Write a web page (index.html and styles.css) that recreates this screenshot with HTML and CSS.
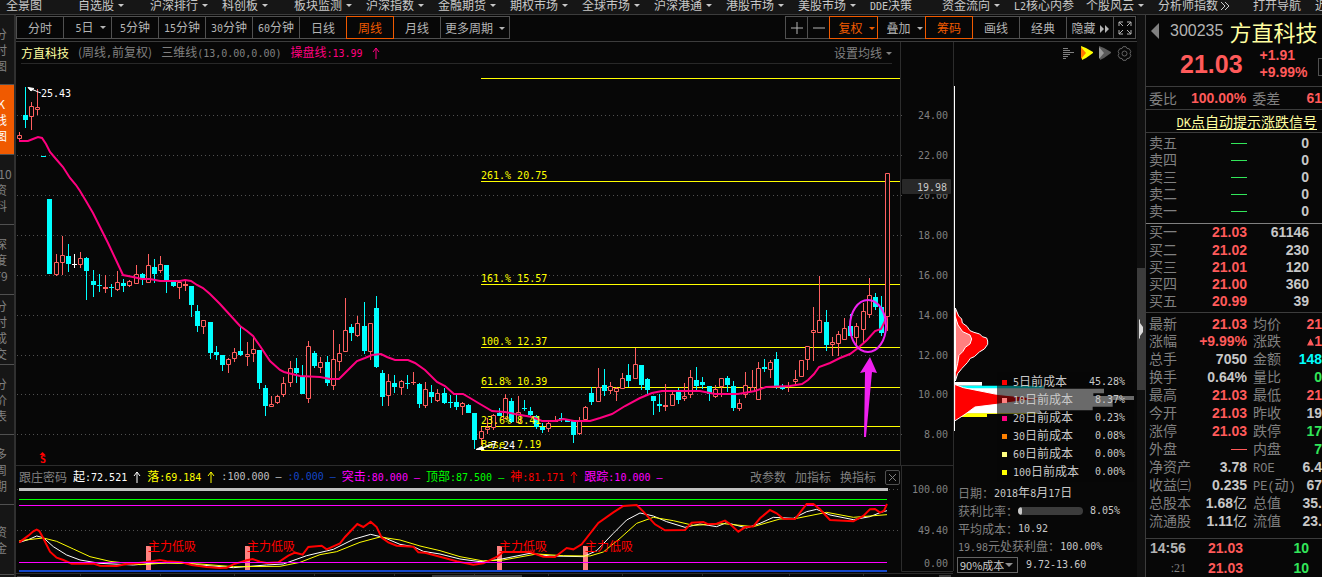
FILE: index.html
```html
<!DOCTYPE html>
<html lang="zh-CN">
<head>
<meta charset="utf-8">
<title>方直科技 周线</title>
<link rel="stylesheet" href="styles.css">
</head>
<body>
<div class="app">
<nav class="menu">
  <a class="menu-item" href="#">全景图</a>
  <a class="menu-item drop" href="#">自选股</a>
  <a class="menu-item drop" href="#">沪深排行</a>
  <a class="menu-item drop" href="#">科创板</a>
  <a class="menu-item drop" href="#">板块监测</a>
  <a class="menu-item drop" href="#">沪深指数</a>
  <a class="menu-item drop" href="#">金融期货</a>
  <a class="menu-item drop" href="#">期权市场</a>
  <a class="menu-item drop" href="#">全球市场</a>
  <a class="menu-item drop" href="#">沪深港通</a>
  <a class="menu-item drop" href="#">港股市场</a>
  <a class="menu-item drop" href="#">美股市场</a>
  <a class="menu-item" href="#"><span class="n">DDE</span>决策</a>
  <a class="menu-item drop" href="#">资金流向</a>
  <a class="menu-item" href="#"><span class="n">L2</span>核心内参</a>
  <a class="menu-item drop" href="#">个股风云</a>
  <a class="menu-item wide" href="#">分析师指数<svg class="dbl" viewBox="0 0 10 8"><path d="M1 0l4 4-4 4M5 0l4 4-4 4"/></svg></a>
  <a class="menu-item open" href="#">打开导航</a>
  <a class="menu-item" href="#">近</a>
</nav>
<div class="main">
  <aside class="side">
    <button class="tab"><span>分</span><span>时</span><span>图</span></button>
    <button class="tab active"><span>K</span><span>线</span><span>图</span></button>
    <button class="tab"><span class="num">10</span><span>资</span><span>料</span></button>
    <button class="tab"><span>深</span><span>度</span><span>F9</span></button>
    <button class="tab"><span>分</span><span>时</span><span>成</span><span>交</span></button>
    <button class="tab"><span>分</span><span>价</span><span>表</span></button>
    <button class="tab"><span>多</span><span>周</span><span>期</span></button>
    <button class="tab"><span>资</span><span>金</span></button>
  </aside>
  <section class="center">
    <div class="toolbar">
      <button class="btn">分时</button>
      <button class="btn drop"><span class="n">5</span>日</button>
      <button class="btn"><span class="n">5</span>分钟</button>
      <button class="btn"><span class="n">15</span>分钟</button>
      <button class="btn"><span class="n">30</span>分钟</button>
      <button class="btn"><span class="n">60</span>分钟</button>
      <button class="btn">日线</button>
      <button class="btn on">周线</button>
      <button class="btn">月线</button>
      <button class="btn more drop">更多周期</button>
      <span class="grow"></span>
      <button class="btn small" aria-label="放大"><svg class="ico" viewBox="0 0 12 12"><path d="M6 0v12M0 6h12"/></svg></button>
      <button class="btn small" aria-label="缩小"><svg class="ico" viewBox="0 0 12 12"><path d="M0 6h12"/></svg></button>
      <button class="btn on drop">复权</button>
      <button class="btn drop">叠加</button>
      <button class="btn on">筹码</button>
      <button class="btn">画线</button>
      <button class="btn">经典</button>
      <button class="btn">隐藏<svg class="fwd" viewBox="0 0 10 8"><path d="M1 0l4 4-4 4zM6 0l4 4-4 4z"/></svg></button>
      <button class="btn small" aria-label="全屏"><svg class="ico full" viewBox="0 0 14 14"><path d="M1 5V1h4M1 1l4 4M9 1h4v4M13 1L9 5M1 9v4h4M1 13l4-4M13 9v4H9M13 13L9 9"/></svg></button>
    </div>
    <div class="body">
      <div class="charts">
        <div class="head">
          <span class="name">方直科技</span>
          <span>(周线<span class="n">,</span>前复权)</span>
          <span>三维线<span class="n">(13,0.00,0.00)</span></span>
          <span class="pink">操盘线<span class="n">:13.99</span></span>
          <svg class="up pink" viewBox="0 0 8 12"><path d="M4 1v11M1 5l3-4 3 4"/></svg>
          <span class="grow"></span>
          <button class="plain drop">设置均线</button>
        </div>
        <svg class="kline" viewBox="16 64 938 402">
          <g id="grid" class="grid"></g>
          <path class="axis" d="M900.5 42V466M953.5 42V466M16 465.5H953"/>
          <g class="axis-text" id="axis"></g>
          <path class="fib" d="M481 78.5H900M481 181.5H900M481 284.5H900M481 347.5H900M481 387.5H900M481 426.5H900M481 450.5H900"/>
          <g id="candles" class="candles"></g>
          <polyline class="ma" points="19,141 28,141 33,139 38,137 42,138 46,144 50,152 56,159 63,167 70,178 76,185 80,191 86,201 93,213 100,227 108,243 116,260 123,275 133,277 142,279 150,279 160,281 180,281 185,280 191,281 197,285 203,288 210,294 220,304 230,315 240,326 247,331 253,336 260,346 270,361 280,370 284,372 300,376 320,377 330,379 339,379 345,373 352,366 357,361 365,358 372,355 381,354 387,357 395,360 408,360 415,363 425,370 437,382 445,386 454,394 463,394 470,398 480,404 492,411 505,412 515,414 532,417 542,421 555,421 564,419 574,421 590,421 600,418 612,414 625,406 640,398 652,393 662,391 700,391 715,394 738,394 755,391 766,387 790,386 802,384 808,380 814,374 819,367 830,363 840,358 850,354 858,348 867,340 875,331 881,329 884,323 887,317"/>
          <g class="fib-text">
            <text x="481" y="179">261.% 20.75</text>
            <text x="481" y="282">161.% 15.57</text>
            <text x="481" y="345">100.% 12.37</text>
            <text x="481" y="385">61.8% 10.39</text>
            <text x="481" y="424">23.6% 8.41</text>
            <text x="481" y="448">Base  7.19</text>
          </g>
          <g class="peak">
            <path d="M28 87.500l6 1-3 2.500zM32 89.500l3 1 2 1 4 1.500M476 449.500l6-3 2 3zM481 448l4-1 4-2 6-1"/>
            <text x="41" y="97">25.43</text>
            <text x="485" y="449">-7.24</text>
          </g>
          <g class="mark"><path d="M42.500 452l3 3h-6z"/><text x="40" y="463">S</text></g>
          <ellipse class="ring" cx="868" cy="326" rx="18" ry="26"/>
          <path class="arrow" d="M870 357l7 16-5-1-6 65h-2l1-65-5 1z"/>
          <rect class="tag" x="902" y="179" width="49" height="15" rx="1"/>
          <text class="tag-text" x="947" y="191">19.98</text>
        </svg>
        <div class="ind-head">
          <span class="dim">跟庄密码</span>
          <span class="white">起<span class="n">:72.521</span></span>
          <svg class="up white" viewBox="0 0 8 12"><path d="M4 1v11M1 5l3-4 3 4"/></svg>
          <span class="yellow">落<span class="n">:69.184</span></span>
          <svg class="up yellow" viewBox="0 0 8 12"><path d="M4 1v11M1 5l3-4 3 4"/></svg>
          <span class="silver n">:100.000 –</span>
          <span class="blue n">:0.000 –</span>
          <span class="magenta">突击<span class="n">:80.000 –</span></span>
          <span class="green">顶部<span class="n">:87.500 –</span></span>
          <span class="red">神<span class="n">:81.171</span></span>
          <svg class="up red" viewBox="0 0 8 12"><path d="M4 1v11M1 5l3-4 3 4"/></svg>
          <span class="magenta">跟踪<span class="n">:10.000 –</span></span>
          <span class="grow"></span>
          <button class="plain">改参数</button>
          <button class="plain">加指标</button>
          <button class="plain">换指标</button>
          <button class="close" aria-label="关闭"><svg viewBox="0 0 9 9"><path d="M1 1l7 7M8 1L1 8"/></svg></button>
        </div>
        <svg class="ind" viewBox="16 488 938 89">
          <path class="grid" d="M17 530.500H904M17 489.500H904"/>
          <path class="axis" d="M901.500 466V571.500H953M953.500 466V571M16 573.500H953M80.500 573v3M160.500 573v3M234.500 573v3M314.500 573v3M394.500 573v3M474.500 573v3M548.500 573v3M622.500 573v3M702.500 573v3M789.500 573v3M863.500 573v3"/>
          <g class="axis-text"><text x="948" y="493">100.00</text><text x="948" y="534">49.40</text><text x="948" y="567">0.00</text></g>
          <path class="l-silver" d="M19 489.500H888"/>
          <path class="l-green" d="M19 499.500H887"/>
          <path class="l-mag" d="M19 505.500H887"/>
          <path class="bars" d="M146 546h5v24h-5zM245 546h5v24h-5zM497 546h5v24h-5zM583 546h5v24h-5z"/>
          <g transform="translate(0 380) scale(.33333)" class="lines">
            <polyline class="w" points="58,487 85,479 110,468 130,473 160,500 200,525 240,540 300,550 400,555 470,549 550,548 600,555 700,563 800,555 850,552 920,527 1000,508 1060,478 1112,463 1150,472 1200,493 1240,500 1270,514 1320,522 1380,537 1440,545 1500,538 1590,520 1650,528 1750,530 1790,512 1840,460 1880,420 1920,399 1960,408 2000,425 2055,442 2100,432 2150,440 2180,428 2240,444 2280,430 2320,412 2380,415 2420,395 2450,388 2490,405 2560,419 2610,410 2640,398 2661,392"/>
            <polyline class="y" points="58,482 130,474 170,484 220,507 270,530 330,544 420,554 500,549 600,552 700,560 840,559 900,547 960,524 1010,515 1080,487 1140,471 1200,480 1260,498 1320,512 1380,530 1450,543 1510,540 1610,522 1690,527 1770,528 1810,516 1860,475 1910,430 1960,412 2020,422 2080,436 2170,431 2260,440 2340,417 2390,415 2480,397 2560,412 2661,404"/>
            <polyline class="r" points="58,487 85,467 100,454 110,449 118,453 130,475 150,515 170,533 190,540 215,551 280,551 300,557 350,558 380,552 410,550 440,546 480,540 500,544 545,547 575,555 620,561 660,564 680,563 700,553 740,541 758,537 780,545 800,549 835,547 865,527 885,518 908,524 925,501 965,497 980,508 1020,490 1035,471 1072,432 1090,441 1112,425 1130,441 1145,473 1165,487 1190,497 1240,500 1255,517 1275,518 1320,530 1370,544 1420,554 1450,550 1490,531 1510,516 1590,516 1630,530 1665,531 1700,504 1720,508 1745,493 1795,429 1840,397 1870,378 1910,375 1930,395 1965,433 1995,451 2055,450 2075,428 2110,426 2125,433 2150,431 2175,422 2190,432 2215,455 2235,442 2260,439 2280,415 2310,390 2330,400 2350,416 2385,417 2420,372 2440,372 2460,388 2490,420 2560,424 2590,408 2610,388 2625,387 2640,398 2652,392 2661,372"/>
          </g>
          <path class="l-mag" d="M19 562.500H887"/>
          <path class="l-blue" d="M19 571H887"/>
          <g class="sig"><text x="148" y="551">主力低吸</text><text x="247" y="551">主力低吸</text><text x="499" y="551">主力低吸</text><text x="585" y="551">主力低吸</text></g>
          <path class="thumb" d="M17 577v-1h13v1zM432 577v-2h90v2zM939 577v-2h12v2z"/>
        </svg>
      </div>
      <div class="chips">
        <div class="chips-icons">
          <svg class="i-list" viewBox="0 0 12 12"><path d="M1 1.500h5M1 3.500h7M1 5.500h11M1 7.500h7M1 9.500h5M1 11.500h3"/></svg>
          <svg class="i-flag" viewBox="0 0 12 14"><path fill="#ff0" d="M0 0l5 2 7 4v1L5 12l-4 2z"/><path fill="#ff7800" d="M0 1l5 6-5 6z"/></svg>
          <svg class="i-flag" viewBox="0 0 12 14"><path fill="#5a5a5a" d="M0 0l5 2 7 4v1L5 12l-4 2z"/><path fill="#9a9a9a" d="M0 1l5 6-5 6z"/></svg>
          <svg class="i-gear" viewBox="0 0 15 15"><path d="M5 2.500L6 .700h3l1 1.800 2.300.300L13.800 5.500 13 7.500l.800 2-1.500 2.700-2.300.300-1 1.800H6l-1-1.800-2.300-.300L1.200 9.500l.800-2-.800-2 1.500-2.700z"/><circle cx="7.500" cy="7.500" r="2.500"/></svg>
        </div>
        <div class="chips-chart">
          <svg viewBox="954 64 183 420">
            <path stroke="#fff" d="M954.500 86V431"/>
            <g transform="translate(880 300) scale(.33333)">
              <path class="o" fill="red" d="M226 24l10 24 9 9 2 12 14 10 9 13 12 5 17 5 8 8 13 4 3 9v10l-10 14-15 9-15 14-12 5-9 13-16 17-13 16-7 22z"/>
              <path class="o" fill="#ff8080" d="M226 50l8 25 14 20 22 10 5 12-5 15-14 10-7 12-12 12-4 24-6 25z"/>
              <path fill="#fff" d="M224 246h82v11h-82zM224 262h270v4h178v14h-32v8h122v12h-64v20h-60v11H480v10H224z"/>
              <path fill="#0ff" d="M224 257h266v8H224z"/>
              <path fill="#ff0" d="M224 340h256v2H321v9h-97z"/>
              <path class="o" fill="red" d="M224 253l26 10 35 7 65 13 80 8 70 5-70 6-80 11-65 8-30 22-31 20z"/>
            </g>
          </svg>
          <ul class="legend">
            <li><i class="c1"></i><span><b class="n">5</b>日前成本</span><b class="n">45.28%</b></li>
            <li><i class="c2"></i><span><b class="n">10</b>日前成本</span><b class="n">8.37%</b></li>
            <li><i class="c3"></i><span><b class="n">20</b>日前成本</span><b class="n">0.23%</b></li>
            <li><i class="c4"></i><span><b class="n">30</b>日前成本</span><b class="n">0.08%</b></li>
            <li><i class="c5"></i><span><b class="n">60</b>日前成本</span><b class="n">0.00%</b></li>
            <li><i class="c6"></i><span><b class="n">100</b>日前成本</span><b class="n">0.00%</b></li>
          </ul>
        </div>
        <div class="chips-info">
          <p><span>日期：</span><em><b class="n">2018</b>年<b class="n">8</b>月<b class="n">17</b>日</em></p>
          <p><span>获利比率：</span><span class="bar"><span class="fill"></span></span><em class="n">8.05%</em></p>
          <p><span>平均成本：</span><em class="n">10.92</em></p>
          <p><span><b class="n">19.98</b>元处获利盘：</span><em class="n">100.00%</em></p>
          <p><span class="pick drop"><select aria-label="成本区间"><option>90%成本</option></select></span><em class="n">9.72-13.60</em></p>
        </div>
      </div>
    </div>
  </section>
  <div class="strip"><div class="strip-thumb"><svg viewBox="0 0 4 20"><path d="M0 0l1 1v3l3 4v5l-3 4v2l-1 1z"/></svg></div></div>
  <section class="quote">
    <div class="title">
      <div class="title-name"><svg class="prev" viewBox="0 0 8 16"><path d="M8 0v16L0 8z"/></svg><span class="code">300235</span><strong>方直科技</strong></div>
      <div class="title-price"><span class="price">21.03</span><span class="chg"><span>+1.91</span><span>+9.99%</span></span><span class="box"></span></div>
    </div>
    <div class="ratio"><span>委比</span><b>100.00%</b><span>委差</span><b>61</b></div>
    <div class="dk"><a href="#"><span class="lat">DK</span>点自动提示涨跌信号</a></div>
    <table class="book sell">
      <tr><th>卖五</th><td><i></i></td><td>0</td></tr>
      <tr><th>卖四</th><td><i></i></td><td>0</td></tr>
      <tr><th>卖三</th><td><i></i></td><td>0</td></tr>
      <tr><th>卖二</th><td><i></i></td><td>0</td></tr>
      <tr><th>卖一</th><td><i></i></td><td>0</td></tr>
    </table>
    <table class="book buy">
      <tr><th>买一</th><td>21.03</td><td>61146</td></tr>
      <tr><th>买二</th><td>21.02</td><td>230</td></tr>
      <tr><th>买三</th><td>21.01</td><td>120</td></tr>
      <tr><th>买四</th><td>21.00</td><td>360</td></tr>
      <tr><th>买五</th><td>20.99</td><td>39</td></tr>
    </table>
    <table class="stats">
      <tr><th>最新</th><td class="u">21.03</td><th>均价</th><td class="u">21</td></tr>
      <tr><th>涨幅</th><td class="u">+9.99%</td><th>涨跌</th><td class="u"><svg class="tri" viewBox="0 0 8 8"><path d="M4 0l4 8H0z"/></svg>1</td></tr>
      <tr><th>总手</th><td>7050</td><th>金额</th><td class="cy">148</td></tr>
      <tr><th>换手</th><td>0.64%</td><th>量比</th><td class="dn">0</td></tr>
      <tr><th>最高</th><td class="u">21.03</td><th>最低</th><td class="u">21</td></tr>
      <tr><th>今开</th><td class="u">21.03</td><th>昨收</th><td>19</td></tr>
      <tr><th>涨停</th><td class="u">21.03</td><th>跌停</th><td class="dn">17</td></tr>
      <tr><th>外盘</th><td class="u"><i></i></td><th>内盘</th><td class="dn">7</td></tr>
      <tr><th>净资产</th><td>3.78</td><th><span class="lat">ROE</span></th><td>6.4</td></tr>
      <tr><th>收益㈢</th><td>0.235</td><th><span class="lat">PE(</span>动<span class="lat">)</span></th><td>67</td></tr>
      <tr><th>总股本</th><td>1.68<span class="yi">亿</span></td><th>总值</th><td>35.</td></tr>
      <tr><th>流通股</th><td>1.11<span class="yi">亿</span></td><th>流值</th><td>23.</td></tr>
    </table>
    <table class="book ticks">
      <tr><th class="t">14:56</th><td>21.03</td><td>10</td></tr>
      <tr><th class="s">:21</th><td>21.03</td><td>10</td></tr>
    </table>
  </section>
</div>
</div>
<script src="chart.js"></script>
</body>
</html>
```
FILE: chart.js
```js
// Each candle: x, high, body top, body bottom, low, kind (u = up, d = down, w = flat)
const candles = `19,132,135,139,140,u 25,87,115,120,128,d 31,102,106,117,130,u 37,89,107,110,115,u 43,156,156,157,157,d
49,199,199,274,274,d 56,254,262,275,276,u 62,236,255,263,275,u 68,244,256,264,272,d 74,254,264,265,268,w 80,252,258,265,268,u
86,257,258,271,300,d 93,270,281,285,297,d 99,274,285,286,292,d 105,275,287,289,293,u 111,284,287,288,297,d 117,271,282,290,291,u
123,279,283,286,292,d 129,280,281,286,287,u 136,265,274,284,284,u 142,273,274,279,285,d 148,254,265,283,283,u 154,259,267,274,283,d
160,256,264,271,273,u 166,265,265,281,293,d 173,280,282,286,287,d 179,282,282,288,299,u 185,281,284,286,291,u 191,286,286,305,317,d
197,305,311,326,332,d 203,320,320,327,334,u 210,322,322,353,359,d 216,346,352,355,360,d 222,355,355,365,371,d 228,358,359,365,373,u
234,348,352,359,362,u 240,327,351,355,356,d 247,342,354,357,366,u 253,338,349,354,362,u 259,350,350,383,389,d 265,385,388,406,416,d
271,396,404,407,407,u 277,395,396,403,404,u 283,377,383,395,397,u 290,361,368,383,387,u 296,358,368,373,383,d 302,365,376,394,394,d
308,341,346,399,403,u 314,351,353,366,368,d 320,357,362,368,373,u 327,356,362,383,386,d 333,330,359,386,390,u 339,344,353,362,371,u
345,298,330,352,352,u 351,324,327,333,341,d 357,316,323,336,337,u 364,302,326,351,354,d 370,323,323,352,360,u 376,296,308,367,368,d
382,370,373,397,406,d 388,374,381,396,406,u 394,375,383,387,393,d 401,380,381,388,395,u 407,375,383,384,389,d 413,372,382,383,385,u
419,383,384,404,408,d 425,382,389,406,408,u 431,385,392,397,403,d 437,389,393,401,402,u 444,388,393,403,404,d 450,395,402,403,408,d
456,395,402,407,410,d 462,402,403,407,415,u 468,404,405,413,413,d 474,413,413,440,449,d 481,427,431,439,445,u 487,418,427,430,434,u
493,414,415,428,430,u 499,408,413,416,416,d 505,394,398,419,419,u 511,398,401,422,423,d 518,396,412,423,423,u 524,400,408,409,411,d
530,407,411,415,417,d 536,415,416,427,429,d 542,423,427,430,433,d 548,420,423,429,432,u 555,416,420,422,422,u 561,413,418,419,422,d
567,419,420,422,422,d 573,420,421,435,443,d 579,417,421,434,435,u 585,406,407,420,420,u 591,387,393,402,405,d 598,368,387,402,402,u
604,369,385,391,396,d 610,382,386,391,394,u 616,387,388,392,401,u 622,373,378,389,389,u 628,364,375,381,387,d 635,348,364,379,379,u
641,365,365,385,390,d 647,378,379,390,394,d 653,396,396,401,415,d 659,394,404,406,412,d 665,384,405,407,411,u 672,392,394,406,406,u
678,388,391,400,404,d 684,383,396,399,401,u 690,370,377,395,398,u 696,367,380,386,390,d 702,377,382,385,389,d 709,386,386,394,401,d
715,385,389,397,398,u 721,378,378,387,397,u 727,376,378,385,392,d 733,381,386,408,411,d 739,399,403,409,411,u 745,372,385,395,398,u
752,370,387,392,392,u 758,362,368,400,400,u 764,359,367,369,372,d 770,360,362,370,378,u 776,352,359,386,389,d 782,384,387,389,390,d
788,382,386,387,392,u 795,370,379,382,384,u 801,360,360,377,377,u 807,346,346,360,370,u 813,307,330,333,361,u 819,276,320,333,333,u
826,310,322,345,351,d 832,337,342,345,356,u 838,331,334,344,356,u 844,318,328,340,340,u 850,314,326,336,336,d 856,323,326,338,345,u
863,303,311,330,342,u 869,278,295,315,318,u 875,293,297,307,310,d 881,296,307,333,336,d 887,173,173,317,331,u`;

const NS = "http://www.w3.org/2000/svg";

function add(parent, name, attrs, text) {
  const el = document.createElementNS(NS, name);
  for (const key in attrs) el.setAttribute(key, attrs[key]);
  if (text) el.textContent = text;
  parent.appendChild(el);
}

const group = document.getElementById("candles");
for (const item of candles.split(/\s+/)) {
  const [xs, hs, ts, bs, ls, kind] = item.split(",");
  const [x, h, t, b, l] = [xs, hs, ts, bs, ls].map(Number);
  if (kind === "u" && b - t > 2) {
    add(group, "path", { class: "u", d: `M${x + .5} ${h}V${t}M${x + .5} ${b}V${l}M${x - 1.5} ${t + .5}h4V${b - .5}h-4z` });
  } else {
    add(group, "path", { class: "solid " + kind, d: `M${x} ${h}h1V${l}h-1zM${x - 2} ${t}h5V${b}h-5z` });
  }
}

const grid = document.getElementById("grid");
const axis = document.getElementById("axis");
[115, 155, 195, 235, 275, 315, 355, 394, 434].forEach((y, i) => {
  add(grid, "path", { d: `M17 ${y + .5}H904` });
  add(axis, "text", { x: 948, y: y + 4 }, (24 - i * 2).toFixed(2));
});
```
FILE: styles.css
```css
* { box-sizing: border-box; }
body {
  margin: 0;
  background: #070707;
  color: #c0c0c0;
  font: 12px/16px "Noto Sans CJK SC", sans-serif;
}
button {
  font: inherit;
  color: inherit;
  background: none;
  border: 0;
  padding: 0;
  white-space: nowrap;
}
a { color: inherit; text-decoration: none; }
table { border-collapse: collapse; table-layout: fixed; width: 100%; }
th, td { padding: 0; }
.app { min-height: 100vh; display: flex; flex-direction: column; overflow: hidden; }
.n, .kline text, .ind .axis-text text { font-family: "DejaVu Sans Mono", monospace; font-size: 10px; font-weight: 400; font-style: normal; white-space: pre; }
.lat { font: 12px/14px "Liberation Mono", monospace; }
.grow { flex: 1; }

/* top menu */
.menu {
  display: flex;
  height: 15px;
  padding-left: 6px;
  background: #161616;
  border-bottom: 1px solid #3c3c3c;
  overflow: hidden;
  color: #c8c8c8;
}
.menu-item { flex: 0 0 72px; height: 10px; line-height: 10px; white-space: nowrap; }
.menu-item.wide { flex-basis: 95px; }
.menu-item.open { flex-basis: 62px; }
.drop::after {
  content: "";
  display: inline-block;
  margin-left: 4px;
  vertical-align: 3px;
  border: 3px solid transparent;
  border-top-color: currentColor;
  border-bottom: 0;
}
.dbl { width: 10px; height: 8px; margin-left: 2px; fill: none; stroke: #c8c8c8; }

.main { flex: 1; display: flex; min-width: 0; }

/* left tabs */
.side { flex: 0 0 16px; border-right: 2px solid #303030; background: #161616; overflow: hidden; }
.tab {
  display: flex;
  flex-direction: column;
  align-items: center;
  justify-content: center;
  width: 14px;
  height: 70px;
  padding-right: 12px;
  border-bottom: 1px solid #505050;
  color: #808080;
}
.tab.active { background: #f05a00; color: #fff; }
.num { padding-left: 8px; }

/* toolbar */
.center { flex: 1; min-width: 0; display: flex; flex-direction: column; }
.toolbar {
  display: flex;
  height: 27px;
  padding: 1px 1px 2px 0;
  border-bottom: 1px solid #3c3c3c;
}
.btn {
  flex: 0 0 48px;
  height: 23px;
  margin-right: -1px;
  border: 1px solid #505050;
  color: #b4b4b4;
}
.btn:last-child { margin-right: 0; }
.btn.on { position: relative; z-index: 1; border-color: #f05a00; color: #f05a00; }
.btn.drop { flex-basis: 49px; padding-left: 6px; }
.btn.drop::after { margin-left: 6px; }
.btn.more { flex-basis: 70px; padding-left: 0; }
.btn.small { flex-basis: 23px; display: flex; align-items: center; justify-content: center; }
.ico { width: 12px; height: 12px; fill: none; stroke: #b4b4b4; }
.ico.full { width: 14px; height: 14px; }
.fwd { width: 10px; height: 8px; margin-left: 3px; fill: #b4b4b4; }

.body { flex: 1; display: flex; min-width: 0; }
.charts { flex: 1; min-width: 0; }
.kline, .ind { display: block; width: 100%; overflow: visible; }
.head {
  display: flex;
  align-items: center;
  gap: 9px;
  height: 22px;
  margin: 0 62px 0 5px;
  border-bottom: 1px solid #282828;
  color: #808080;
  white-space: nowrap;
}
.name { color: #ffffa0; }
.pink { color: #ff0080; }
.up { width: 8px; height: 12px; fill: none; stroke: currentColor; }
.plain { color: #808080; }

.ind-head {
  display: flex;
  align-items: center;
  gap: 6px;
  height: 22px;
  margin-right: 54px;
  padding-left: 3px;
  white-space: nowrap;
}
.ind-head .plain { margin-left: 3px; }
.close { width: 15px; height: 15px; border: 1px solid #505050; border-radius: 2px; display: flex; align-items: center; justify-content: center; margin: 0 0 0 3px; }
.close svg { width: 9px; height: 9px; stroke: #808080; fill: none; }
.dim { color: #808080; }
.white { color: #fff; }
.yellow { color: #ff0; }
.silver { color: #c0c0c0; }
.blue { color: #1446c8; }
.magenta { color: #f0f; }
.green { color: #0f0; }
.red { color: #f00; }

/* drawings */
.grid { stroke: #505050; stroke-dasharray: 1 3; fill: none; }
.axis { stroke: #2c2c2c; fill: none; }
.axis-text { fill: #808080; text-anchor: end; }
.fib { stroke: #ff0; fill: none; }
.fib-text { fill: #ff0; }
.candles .u { stroke: #ff6060; fill: #070707; }
.candles .solid.u { stroke: none; fill: #ff6060; }
.candles .d { fill: #0ff; }
.candles .w { fill: #fff; }
.ma { fill: none; stroke: #ff0080; stroke-width: 2; }
.peak text { fill: #fff; }
.peak path { fill: #fff; stroke: #fff; }
.mark { fill: #f00; }
.kline .mark text { font-weight: 700; }
.ring { fill: none; stroke: #f020f0; stroke-width: 2; }
.arrow { fill: #f020f0; }
.tag { fill: #282828; }
.tag-text { fill: #c8c8c8; text-anchor: end; }
.l-silver { stroke: #c0c0c0; stroke-width: 3; }
.l-green { stroke: #0f0; }
.l-mag { stroke: #f0f; }
.l-blue { stroke: #1446c8; stroke-width: 2; }
.bars { fill: #ff8080; }
.lines polyline { fill: none; vector-effect: non-scaling-stroke; }
.lines .w { stroke: #fff; }
.lines .y { stroke: #ff0; }
.lines .r { stroke: #f00; stroke-width: 2; }
.sig { fill: #f00; }
.thumb { fill: #3c3c3c; }

/* cost distribution */
.chips { flex: 0 0 183px; min-width: 0; display: flex; flex-direction: column; }
.chips-icons { height: 22px; display: flex; align-items: center; justify-content: flex-end; gap: 6px; padding-right: 5px; }
.i-list { width: 12px; height: 12px; stroke: #808080; }
.i-list { margin-right: 1px; }
.i-flag { width: 12px; height: 14px; }
.i-gear { width: 15px; height: 15px; fill: none; stroke: #646464; }
.chips-chart { position: relative; }
.chips-chart > svg { display: block; width: 100%; height: 420px; }
.o { stroke: #fff; stroke-width: 3; }
.legend {
  position: absolute;
  right: 3px;
  bottom: 2px;
  width: 137px;
  margin: 0;
  padding: 1px 9px 1px 5px;
  list-style: none;
  background: rgba(7, 7, 7, .6);
  color: #c8c8c8;
}
.legend li { display: flex; align-items: center; gap: 6px; height: 18px; white-space: nowrap; }
.legend li > :last-child { margin-left: auto; }
.legend i { width: 5px; height: 5px; }
.c1 { background: #f00; }
.c2 { background: #ff8080; }
.c3 { background: #ff0080; }
.c4 { background: #ff8000; }
.c5 { background: #ffff80; }
.c6 { background: #ff0; }
.chips-info { color: #808080; padding-left: 4px; }
.chips-info p { display: flex; align-items: center; height: 18px; margin: 0; white-space: nowrap; }
.chips-info em { font-style: normal; color: #c8c8c8; }
.bar { width: 65px; height: 8px; margin-right: 7px; border-radius: 4px; background: #3c3c3c; overflow: hidden; }
.fill { display: block; width: 4px; height: 8px; border-radius: 4px; background: #c8c8c8; }
.pick {
  display: flex;
  align-items: center;
  width: 61px;
  height: 16px;
  margin: 0 8px 0 -1px;
  border: 1px solid #646464;
  color: #909090;
}
.pick.drop::after { margin: 0 4px 0 auto; border-width: 4px 4px 0; }
.pick select {
  appearance: none;
  width: 46px;
  padding: 0 0 0 2px;
  border: 0;
  background: transparent;
  color: #c8c8c8;
  font: 11px/14px "Noto Sans CJK SC", sans-serif;
}

/* divider */
.strip { flex: 0 0 8px; padding-top: 253px; background: #101010; }
.strip-thumb { height: 122px; background: #3c3c3c; display: flex; align-items: center; }
.strip-thumb svg { width: 4px; height: 20px; margin-left: 2px; fill: #dcdcdc; }

/* quote panel */
.quote {
  flex: 0 0 177px;
  border-left: 1px solid #3c3c3c;
  overflow: hidden;
  color: #808080;
  font-size: 14px;
}
.title { height: 72px; border-bottom: 1px solid #3c3c3c; white-space: nowrap; overflow: hidden; }
.title-name { display: flex; align-items: center; height: 32px; padding-left: 5px; font: 16px "Liberation Sans", sans-serif; color: #b4b4b4; }
.prev { width: 8px; height: 16px; margin-right: 11px; fill: #808080; }
.title-name strong { margin-left: 6px; font: 22px/32px "Noto Sans CJK SC", sans-serif; color: #ffffa0; }
.title-price { display: flex; align-items: center; padding-left: 34px; font: bold 14px/17px "Liberation Sans", sans-serif; color: #ff5a5a; }
.price { font-size: 25px; }
.chg { display: flex; flex-direction: column; margin-left: 17px; }
.box { flex: 0 0 18px; height: 18px; margin: 6px 0 0 11px; border: 1px solid #505050; }
.ratio, .dk { display: flex; align-items: center; height: 23px; border-bottom: 1px solid #3c3c3c; white-space: nowrap; }
.ratio { gap: 6px; padding-left: 3px; }
.ratio b { font-family: "Liberation Sans", sans-serif; color: #ff5a5a; }
.ratio b:nth-child(2) { margin-left: 8px; }
.ratio b:last-child { margin-left: auto; }
.dk { justify-content: flex-end; padding-right: 5px; color: #ffffa0; }
.dk a { text-decoration: underline; text-underline-offset: 2px; line-height: 18px; }
.quote th { text-align: left; vertical-align: top; font-weight: 400; line-height: 14px; padding-left: 3px; white-space: nowrap; }
.quote td { text-align: right; font: bold 14px/17px "Liberation Sans", sans-serif; color: #c8c8c8; white-space: nowrap; }
.quote tr { height: 17px; }
.quote td i { display: inline-block; width: 16px; height: 1px; background: currentColor; vertical-align: 4px; }
.book th { width: 48px; }
.book td:nth-child(2) { width: 53px; color: #ff5a5a; }
.book td:nth-child(3) { padding-right: 13px; }
.sell { margin: 2px 0 3px; }
.quote .sell td:nth-child(2) { color: #32e65a; }
.buy { border-top: 1px solid #808080; }
.buy tr:first-child { height: 18px; }
.stats { margin-top: 2px; border-top: 1px solid #3c3c3c; }
.stats th:nth-child(1) { width: 45px; }
.stats td:nth-child(2) { width: 56px; }
.stats th:nth-child(3) { width: 50px; padding-left: 6px; }
.quote .stats tr { height: 18px; }
.stats tr:first-child td, .stats tr:first-child th { padding-top: 3px; }
.quote .u { color: #ff5a5a; }
.quote .dn { color: #32e65a; }
.quote .cy { color: #0ff; }
.tri { width: 7px; height: 8px; fill: currentColor; }
.yi { font: 14px/14px "Noto Sans CJK SC", sans-serif; }
.ticks { margin-top: 7px; border-top: 1px solid #3c3c3c; }
.quote .ticks tr { height: 20px; }
.quote .ticks th { vertical-align: middle; }
.quote .ticks td:nth-child(2) { padding-right: 4px; }
.quote .ticks td:nth-child(3) { color: #32e65a; }
.quote .t { font: bold 14px/17px "Liberation Sans", sans-serif; color: #b4b4b4; padding-left: 4px; }
.quote .s { font: 12px/17px "Liberation Serif", serif; text-align: right; padding-right: 8px; }
```
